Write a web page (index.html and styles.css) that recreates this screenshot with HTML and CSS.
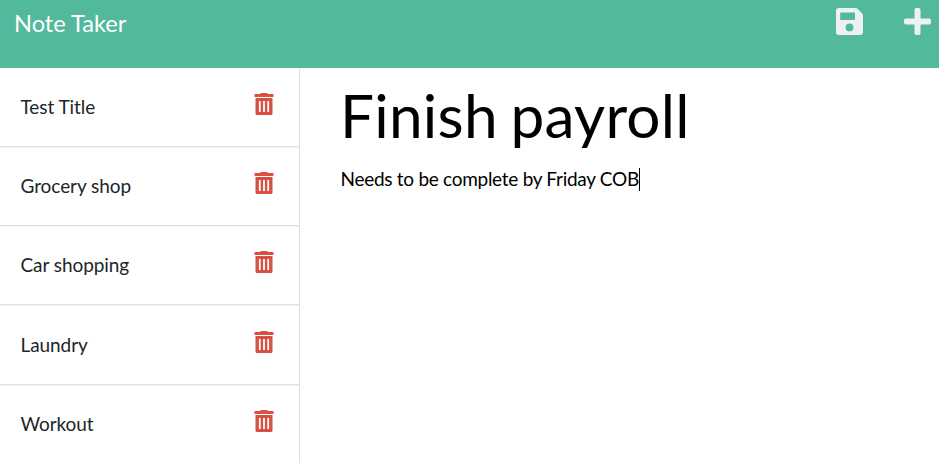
FILE: index.html
```html
<!DOCTYPE html>
<html lang="en">
<head>
<meta charset="utf-8">
<title>Note Taker</title>
<link rel="stylesheet" href="styles.css">
</head>
<body>
<svg class="defs" aria-hidden="true">
  <symbol id="trash" viewBox="0 0 20 23"><path fill-rule="evenodd" d="M6.500 1V.5q0-.5.5-.5h6q.5 0 .5.500V1h5.700q.3 0 .3.300v2.400q0 .3-.3.300H.8q-.3 0-.3-.3V1.300Q.5 1 .8 1zM1.500 5h17v15.500q0 1.500-1.500 1.500H3q-1.500 0-1.500-1.500zM4.900 8v11h1.800V8zM9.100 8v11h1.800V8zM13.300 8v11h1.800V8z"/></symbol>
</svg>
<header class="navbar">
  <span class="brand">Note Taker</span>
  <div class="actions">
    <svg class="save" viewBox="0 0 27 27"><path fill-rule="evenodd" d="M3 0h16.500q1.200 0 2 .8L26.200 5.500q.8.800.8 2V24q0 3-3 3H3q-3 0-3-3V3Q0 0 3 0zM5 4.500q-.8 0-.8.800v6q0 .8.8.800h13.200q.8 0 .8-.8v-6q0-.8-.8-.8zM13.500 15.500a3.900 3.900 0 1 0 0 7.800a3.900 3.900 0 1 0 0-7.800z"/></svg>
    <svg class="plus" viewBox="0 0 27 27"><path d="M12.300 0h2.400q1.800 0 1.800 1.800v8.700h8.700q1.800 0 1.800 1.800v2.400q0 1.800-1.800 1.800h-8.700v8.700q0 1.800-1.800 1.800h-2.400q-1.800 0-1.800-1.800v-8.700H1.800Q0 16.500 0 14.700v-2.400q0-1.800 1.800-1.800h8.700V1.800Q10.500 0 12.300 0z"/></svg>
  </div>
</header>
<main class="layout">
  <ul class="notes">
    <li class="note"><span>Test Title</span><svg class="trash"><use href="#trash"/></svg></li>
    <li class="note"><span>Grocery shop</span><svg class="trash"><use href="#trash"/></svg></li>
    <li class="note"><span>Car shopping</span><svg class="trash"><use href="#trash"/></svg></li>
    <li class="note"><span>Laundry</span><svg class="trash"><use href="#trash"/></svg></li>
    <li class="note"><span>Workout</span><svg class="trash"><use href="#trash"/></svg></li>
  </ul>
  <section class="editor">
    <h1 class="title">Finish payroll</h1>
    <p class="text">Needs to be complete by Friday COB<span class="caret"></span></p>
  </section>
</main>
</body>
</html>
```
FILE: styles.css
```css
* { box-sizing: border-box; }
body {
  margin: 0;
  height: 463px;
  overflow: hidden;
  background: #fff;
  font-family: Lato, "Liberation Sans", sans-serif;
  color: #212529;
}
.defs { display: none; }
.navbar {
  height: 68px;
  padding: 8px 8px 0 14px;
  display: flex;
  justify-content: space-between;
  align-items: flex-start;
  background: #52b99c;
}
.brand { margin-top: -1px; font-size: 23.600px; line-height: 32px; color: #fff; }
.actions { display: flex; gap: 40.700px; fill: #eef1f1; }
.save, .plus { width: 27px; height: 27px; }
.layout { display: flex; height: 395px; }
.notes {
  width: 300px;
  margin: 0;
  padding: 0;
  list-style: none;
  border-right: 1px solid #dfdfdf;
}
.note {
  height: 79.150px;
  padding: 0 25px 0 20.500px;
  display: flex;
  justify-content: space-between;
  border-bottom: 1px solid #dfdfdf;
  box-shadow: 0 1px #f3f3f3;
  font-size: 19px;
  letter-spacing: -0.07px;
  line-height: 78.200px;
}
.note span { padding-top: 0.100px; }
.trash { width: 20px; height: 23px; margin-top: 25.200px; fill: #d95040; }
.editor { flex: 1; padding: 10px 0 0 40px; color: #000; }
.title {
  margin: 0;
  font-size: 60.300px;
  font-weight: 400;
  line-height: 73px;
  letter-spacing: 0.250px;
  word-spacing: -3px;
}
.text { margin: 13px 0 0 0.500px; font-size: 19px; line-height: 30px; letter-spacing: -0.28px; }
.caret {
  display: inline-block;
  width: 1px;
  height: 23px;
  background: #000;
  vertical-align: -5px;
}
```
